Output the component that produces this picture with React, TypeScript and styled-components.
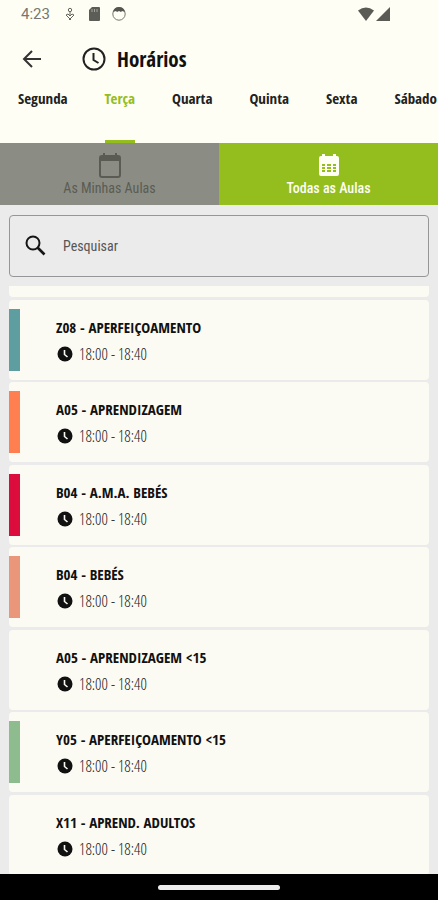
import React, { useState } from "react";
import styled, { createGlobalStyle } from "styled-components";

const boldFont = '"Open Sans Condensed", "Roboto Condensed", "Liberation Sans", sans-serif';
const regularFont = '"Roboto Condensed", "Liberation Sans", sans-serif';
const lightFont = '"Open Sans Condensed Light", "Roboto Condensed", "Liberation Sans", sans-serif';

const GlobalStyle = createGlobalStyle`
  * { box-sizing: border-box; }
  body { margin: 0; background: #ebebeb; }
  body, button, input { font-family: ${boldFont}; }
`;

const Screen = styled.div`
  display: flex;
  flex-direction: column;
  height: 100vh;
  overflow: hidden;
  background: #ebebeb;
  color: #111;
`;

const Top = styled.header`
  background: #fefef5;
`;

const StatusBar = styled.div`
  display: flex;
  align-items: center;
  height: 28px;
  padding: 0 48px 0 21px;
  font: 15px/28px Roboto, sans-serif;
  color: #77776f;
`;

const StatusIcons = styled.div<{ $end?: boolean }>`
  display: flex;
  align-items: center;
  gap: ${(p) => (p.$end ? 2 : 10)}px;
  margin-left: ${(p) => (p.$end ? "auto" : "13px")};
`;

const TitleBar = styled.div`
  display: flex;
  align-items: center;
  height: 61px;
  padding: 0 20px;
`;

const BackButton = styled.button`
  display: flex;
  padding: 0;
  margin-right: 37px;
  border: 0;
  background: none;
  color: #333;
`;

const Title = styled.h1`
  display: flex;
  align-items: center;
  gap: 10px;
  margin: 0;
  font-size: 21px;
  line-height: 28px;
  font-weight: 700;
`;

const Days = styled.nav`
  display: flex;
  justify-content: space-between;
  height: 54px;
  padding: 0 1px 0 18px;
`;

const Day = styled.button<{ $active: boolean }>`
  display: flex;
  align-items: flex-start;
  flex: none;
  padding: 0;
  border: 0;
  border-bottom: 3px solid ${(p) => (p.$active ? "#94bd1e" : "transparent")};
  border-radius: 2px 2px 0 0;
  background: none;
  color: ${(p) => (p.$active ? "#94bd1e" : "#222")};
  font-size: 15px;
  line-height: 18px;
  font-weight: 700;
`;

const Switcher = styled.div`
  display: grid;
  grid-template-columns: 1fr 1fr;
`;

const SwitchButton = styled.button<{ $active: boolean }>`
  display: flex;
  flex-direction: column;
  align-items: center;
  height: 62px;
  padding: 9px 0 0;
  border: 0;
  background: ${(p) => (p.$active ? "#94bd1e" : "#8b8d84")};
  color: ${(p) => (p.$active ? "#fefef5" : "#5a5c53")};
  font-family: ${regularFont};
  font-size: 14px;
  line-height: 18px;
  font-weight: ${(p) => (p.$active ? 500 : 400)};
`;

const Search = styled.label`
  display: flex;
  align-items: center;
  gap: 16px;
  height: 62px;
  margin: 10px 9px 9px;
  padding: 0 14px 1px;
  border: 1px solid #969696;
  border-radius: 4px;
`;

const SearchInput = styled.input`
  flex: 1;
  min-width: 0;
  padding: 0;
  border: 0;
  outline: 0;
  background: none;
  font-family: ${regularFont};
  font-size: 14px;
  line-height: 20px;
  color: #222;
  &::placeholder { color: #555; opacity: 1; }
`;

const List = styled.ul`
  flex: 1;
  min-height: 0;
  overflow: hidden;
  margin: 0;
  padding: 0 9px;
  list-style: none;
`;

const PreviousCard = styled.li`
  height: 11px;
  margin-bottom: 3px;
  border-radius: 0 0 4px 4px;
  background: #fbfbf3;
`;

const Card = styled.li`
  display: flex;
  gap: 36px;
  height: 80px;
  margin-bottom: 2px;
  padding: 9px 0;
  border-radius: 4px;
  background: #fbfbf3;
  &:nth-child(odd) { margin-bottom: 3px; }
`;

const Stripe = styled.div<{ $color: string }>`
  width: 11px;
  background: ${(p) => p.$color};
`;

const Lesson = styled.h2`
  margin: 8px 0 7px;
  font-size: 15px;
  line-height: 20px;
  font-weight: 700;
`;

const Time = styled.div`
  display: flex;
  align-items: center;
  gap: 6px;
  padding-left: 1px;
  font-family: ${lightFont};
  font-size: 16px;
  line-height: 20px;
  color: #222;
`;

const NavigationBar = styled.footer`
  display: flex;
  flex: none;
  align-items: center;
  justify-content: center;
  height: 26px;
  background: #000;
`;

const Handle = styled.div`
  width: 28%;
  height: 5px;
  border-radius: 3px;
  background: #ececec;
`;

const days = ["Segunda", "Terça", "Quarta", "Quinta", "Sexta", "Sábado"];

const lessons = [
  { name: "Z08 - APERFEIÇOAMENTO", color: "#5f9ea0" },
  { name: "A05 - APRENDIZAGEM", color: "#ff7f50" },
  { name: "B04 - A.M.A. BEBÉS", color: "#dc0c3c" },
  { name: "B04 - BEBÉS", color: "#e9967a" },
  { name: "A05 - APRENDIZAGEM <15", color: "transparent" },
  { name: "Y05 - APERFEIÇOAMENTO <15", color: "#8fbc8f" },
  { name: "X11 - APREND. ADULTOS", color: "transparent" },
];

const CalendarIcon = ({ filled }: { filled: boolean }) => (
  <svg width="26" height="27" viewBox="0 0 26 27" fill="currentColor" aria-hidden="true">
    {filled ? (
      <path fillRule="evenodd" d="M5 4h1V2h3v2h8V2h3v2h1a2 2 0 0 1 2 2v16a2 2 0 0 1-2 2H5a2 2 0 0 1-2-2V6a2 2 0 0 1 2-2ZM6 12v2h3v-2Zm5 0v2h4v-2Zm6 0v2h3v-2ZM6 15v2h3v-2Zm5 0v2h4v-2Zm6 0v2h3v-2ZM6 18v2h3v-2Zm5 0v2h4v-2Zm6 0v2h3v-2Z" />
    ) : (
      <path fillRule="evenodd" d="M5 3h1V1h2v2h10V1h2v2h1a3 3 0 0 1 3 3v17a3 3 0 0 1-3 3H5a3 3 0 0 1-3-3V6a3 3 0 0 1 3-3Zm-1 6v14a1 1 0 0 0 1 1h16a1 1 0 0 0 1-1V9Z" />
    )}
  </svg>
);

export default function App() {
  const [day, setDay] = useState("Terça");
  const [all, setAll] = useState(true);
  return (
    <Screen>
      <GlobalStyle />
      <Top>
        <StatusBar>
          <span>4:23</span>
          <StatusIcons>
            <svg width="14" height="16" viewBox="0 0 14 16" fill="none" stroke="#66665f" aria-hidden="true">
              <circle cx="7" cy="4" r="1.700" />
              <path d="M7 6v3M3 9l2-1 2 2 2-2 2 1-4 4zM6 13l1 1 1-1" />
            </svg>
            <svg width="14" height="16" viewBox="0 0 14 16" aria-hidden="true">
              <path d="M5 1h7q1 0 1 1v12q0 1-1 1H3q-1 0-1-1V4z" fill="#5d5d57" />
              <path d="M5 3v3M7.500 3v3M10 3v3" stroke="#a5a59e" />
            </svg>
            <svg width="16" height="16" viewBox="0 0 16 16" fill="none" aria-hidden="true">
              <circle cx="8" cy="8" r="6.200" stroke="#77776f" />
              <path d="M2 6Q3 1 8 1t6 5l-3-1-1 1-2-1-2 1-1-1z" fill="#55554f" />
            </svg>
          </StatusIcons>
          <StatusIcons $end>
            <svg width="16" height="14" viewBox="0 0 16 14" aria-hidden="true">
              <path d="M0 3.500Q8-2.500 16 3.500L8 14z" fill="#5b5b55" />
            </svg>
            <svg width="14" height="14" viewBox="0 0 14 14" aria-hidden="true">
              <path d="M14 0v14H0z" fill="#5b5b55" />
            </svg>
          </StatusIcons>
        </StatusBar>
        <TitleBar>
          <BackButton aria-label="Voltar">
            <svg width="24" height="24" viewBox="0 0 24 24" fill="none" stroke="currentColor" strokeWidth="2" aria-hidden="true">
              <path d="M21 12H4.500M12 4l-8 8 8 8" />
            </svg>
          </BackButton>
          <Title>
            <svg width="26" height="26" viewBox="0 0 26 26" fill="none" stroke="#222" strokeWidth="2" aria-hidden="true">
              <circle cx="13" cy="13" r="10.500" />
              <path d="M12.500 7v7l5 3" />
            </svg>
            Horários
          </Title>
        </TitleBar>
        <Days aria-label="Dias da semana">
          {days.map((d) => (
            <Day key={d} $active={d === day} onClick={() => setDay(d)}>{d}</Day>
          ))}
        </Days>
      </Top>
      <Switcher>
        <SwitchButton $active={!all} onClick={() => setAll(false)}>
          <CalendarIcon filled={false} />
          As Minhas Aulas
        </SwitchButton>
        <SwitchButton $active={all} onClick={() => setAll(true)}>
          <CalendarIcon filled />
          Todas as Aulas
        </SwitchButton>
      </Switcher>
      <Search>
        <svg width="23" height="23" viewBox="0 0 23 23" fill="none" stroke="#151515" aria-hidden="true">
          <circle cx="9" cy="9" r="6.500" strokeWidth="2" />
          <path d="M13.500 13.500L20.500 20.500" strokeWidth="2.600" />
        </svg>
        <SearchInput placeholder="Pesquisar" aria-label="Pesquisar" />
      </Search>
      <List>
        <PreviousCard aria-hidden="true" />
        {lessons.map((l) => (
          <Card key={l.name}>
            <Stripe $color={l.color} />
            <div>
              <Lesson>{l.name}</Lesson>
              <Time>
                <svg width="16" height="16" viewBox="0 0 16 16" aria-hidden="true">
                  <circle cx="8" cy="8" r="7.500" fill="#111" />
                  <path d="M7.500 4v4.500l3 2.500" fill="none" stroke="#fbfbf3" strokeWidth="1.600" />
                </svg>
                18:00 - 18:40
              </Time>
            </div>
          </Card>
        ))}
      </List>
      <NavigationBar><Handle /></NavigationBar>
    </Screen>
  );
}
